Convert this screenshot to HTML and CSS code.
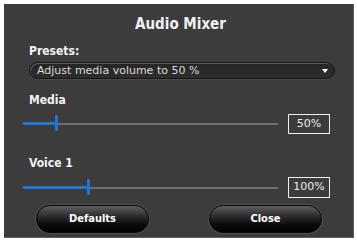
FILE: index.html
```html
<!DOCTYPE html>
<html>
<head>
<meta charset="utf-8">
<link rel="stylesheet" href="styles.css">
</head>
<body>
<div class="panel">
  <div class="title">Audio Mixer</div>
  <div class="label presets-label">Presets:</div>
  <div class="select">
    <span class="select-text">Adjust media volume to 50 %</span>
    <span class="arrow"></span>
  </div>
  <div class="label media-label">Media</div>
  <div class="slider-row">
    <div class="track"><div class="fill" style="width:33px"></div><div class="thumb" style="left:32px"></div></div>
    <div class="value">50%</div>
  </div>
  <div class="label voice-label">Voice 1</div>
  <div class="slider-row row2">
    <div class="track"><div class="fill" style="width:65px"></div><div class="thumb" style="left:64px"></div></div>
    <div class="value">100%</div>
  </div>
  <div class="buttons">
    <div class="btn">Defaults</div>
    <div class="btn">Close</div>
  </div>
</div>
</body>
</html>
```
FILE: styles.css
```css
html, body {
  margin: 0;
  padding: 0;
  background: #ffffff;
}
body {
  padding: 4px 0 0 4px;
  font-family: "DejaVu Sans", Verdana, sans-serif;
  color: #f2f2f2;
}
.panel {
  box-sizing: border-box;
  width: 350px;
  height: 234px;
  background: #3c3c3c;
  border-right: 1px solid #5e5e5e;
  border-bottom: 1px solid #5e5e5e;
  padding-top: 12px;
  display: flex;
  flex-direction: column;
}
.title {
  font-family: "DejaVu Sans Condensed", "DejaVu Sans", sans-serif;
  font-weight: bold;
  font-size: 15px;
  line-height: 16px;
  height: 16px;
  text-align: center;
  padding-left: 4px;
}
.label {
  font-family: "DejaVu Sans Condensed", "DejaVu Sans", sans-serif;
  font-weight: bold;
  font-size: 12px;
  line-height: 14px;
  height: 14px;
  margin-left: 25px;
}
.presets-label { margin-top: 12px; }
.select {
  box-sizing: border-box;
  margin: 4px 0 0 25px;
  width: 306px;
  height: 17px;
  border-radius: 9px;
  background: linear-gradient(#252525, #2e2e2e);
  border: 1px solid #151515;
  box-shadow: inset 1px 1px 0 #5a5a5a, 0 1px 0 #4a4a4a;
  display: flex;
  align-items: center;
  justify-content: space-between;
  padding: 0 6px 0 7px;
}
.select-text {
  font-size: 11px;
  line-height: 13px;
  color: #dcdcdc;
}
.arrow {
  width: 0;
  height: 0;
  border-left: 3px solid transparent;
  border-right: 3px solid transparent;
  border-top: 4px solid #ffffff;
  margin-top: 1px;
}
.media-label { margin-top: 14px; }
.voice-label { margin-top: 22px; }
.slider-row {
  margin: 7px 0 0 19px;
  height: 20px;
  display: flex;
  align-items: center;
}
.row2 { height: 21px; }
.track {
  position: relative;
  width: 255px;
  height: 2px;
  background: #707070;
}
.fill {
  position: absolute;
  left: 0;
  top: -1px;
  height: 3px;
  background: #1f74d4;
}
.thumb {
  position: absolute;
  top: -8px;
  width: 3px;
  height: 16px;
  border-radius: 1px;
  background: #1f74d4;
}
.value {
  box-sizing: border-box;
  margin-left: 10px;
  width: 42px;
  height: 100%;
  border: 1px solid #f0f0f0;
  font-size: 11px;
  line-height: 18px;
  text-align: center;
  color: #eaeaea;
}
.buttons {
  margin: 7px 0 0 32px;
  display: flex;
  gap: 60px;
}
.btn {
  box-sizing: border-box;
  width: 113px;
  height: 28px;
  border-radius: 14px;
  background: linear-gradient(#5e5e5e 0%, #2c2c2c 40%, #0c0c0c 70%, #000 100%);
  border: 1px solid #0a0a0a;
  box-shadow: 0 0 0 1px #4c4c4c;
  font-family: "DejaVu Sans Condensed", "DejaVu Sans", sans-serif;
  font-weight: bold;
  font-size: 11px;
  line-height: 26px;
  text-align: center;
  color: #ffffff;
}
```
